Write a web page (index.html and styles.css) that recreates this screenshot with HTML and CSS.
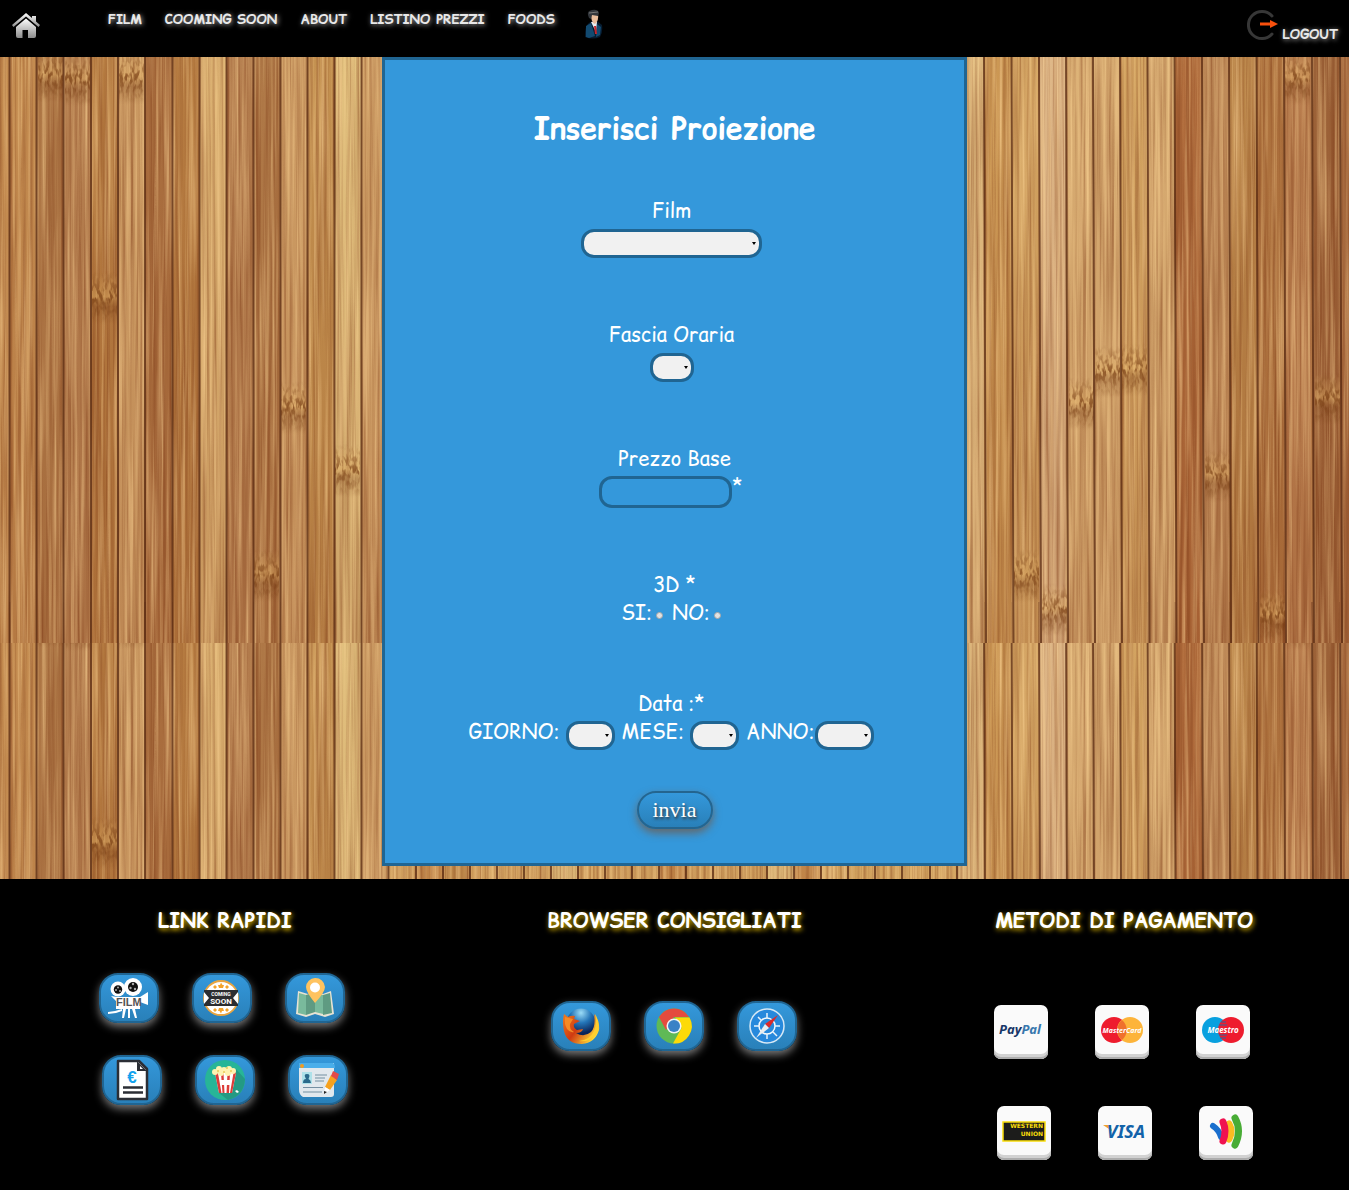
FILE: index.html
```html
<!DOCTYPE html>
<html lang="it">
<head>
<meta charset="utf-8">
<title>Inserisci Proiezione</title>
<link rel="stylesheet" href="styles.css">
</head>
<body>
<header class="topbar">
  <a class="home" href="#" aria-label="Home">
    <svg width="28" height="28" viewBox="0 0 28 28">
      <defs><linearGradient id="steel" x1="0" y1="0" x2="0" y2="1"><stop offset="0" stop-color="#fff"/><stop offset="1" stop-color="#8c8c8c"/></linearGradient></defs>
      <path fill="url(#steel)" d="M14 1 L0 13 L1.500 15 L14 4.500 L26.500 15 L28 13 L24 9.500 V4 H20 V6Z"/>
      <path fill="url(#steel)" d="M14 6.500 L4 15 V24 Q4 26 6 26 H10.500 V18 H16 V26 H22 Q24 26 24 24 V15Z"/>
    </svg>
  </a>
  <nav class="menu">
    <a href="#">FILM</a>
    <a href="#">COOMING SOON</a>
    <a href="#">ABOUT</a>
    <a href="#">LISTINO PREZZI</a>
    <a href="#">FOODS</a>
    <a class="profile" href="#" aria-label="Profilo">
      <svg width="24" height="30" viewBox="0 0 24 30">
        <path fill="#071c30" d="M6 14 Q2 16 2 28 Q10 31 17 28 Q20 23 19 16 L14 12 H9Z"/>
        <path fill="#124a70" d="M3 17 L8 14 L12 27 L6 29 L3 28Z M14 15 L18 18 L17 26 L13 28Z"/>
        <path fill="#e8eef4" d="M8 13 L14 13 L13 23Z"/>
        <path fill="#c8252c" d="M11 17 L13 17 L14 25 L12 25Z"/>
        <path fill="#e9bd9c" d="M8 5 H15 Q16 12 12 15 Q8 14 8 5Z"/>
        <path fill="#32363b" d="M5 6 Q4 2 9 1 Q15 0 16 4 L15 7 L9 6 L8 10 L6 9Z"/>
        <path stroke="#777" stroke-width="1" d="M6 4 L15 3"/>
      </svg>
    </a>
  </nav>
  <a class="logout" href="#">
    <svg width="32" height="32" viewBox="0 0 32 32">
      <path fill="none" stroke="#373737" stroke-width="3" stroke-linecap="round" d="M25 7 A13.500 13.500 0 1 0 25 25"/>
      <path fill="#f9500d" d="M13 13.500 H23 V11 L31 15 L23 19 V16.500 H13Z"/>
    </svg>
    <span>LOGOUT</span>
  </a>
</header>

<main class="stage">
  <form class="card">
    <h1>Inserisci Proiezione</h1>
    <div class="field">
      <label for="film">Film</label>
      <select id="film" class="wide"><option></option></select>
    </div>
    <div class="field">
      <label for="fascia">Fascia Oraria</label>
      <select id="fascia" class="tiny"><option></option></select>
    </div>
    <div class="field centered">
      <label for="prezzo">Prezzo Base</label>
      <div class="price"><input id="prezzo" type="text"><span>*</span></div>
    </div>
    <div class="field choice centered" role="group" aria-labelledby="tred">
      <span id="tred">3D *</span>
      <div class="radios">
        <label for="si">SI:</label><input id="si" type="radio" name="tred">
        <label for="no">NO:</label><input id="no" type="radio" name="tred">
      </div>
    </div>
    <div class="field choice" role="group" aria-labelledby="data">
      <span id="data">Data :*</span>
      <div class="dates">
        <div class="part"><label for="giorno">GIORNO:</label><select id="giorno" class="small"><option></option></select></div>
        <div class="part"><label for="mese">MESE:</label><select id="mese" class="small"><option></option></select></div>
        <div class="part close"><label for="anno">ANNO:</label><select id="anno" class="year"><option></option></select></div>
      </div>
    </div>
    <button type="submit">invia</button>
  </form>
</main>

<footer class="footer">
  <section class="links">
    <h2>LINK RAPIDI</h2>
    <div class="icons">
      <div class="row lead">
        <a class="tile" href="#" aria-label="Film">
          <svg viewBox="0 0 42 42" width="42" height="42">
            <g fill="#fff"><circle cx="10" cy="12" r="7.500"/><circle cx="25" cy="10" r="9"/><path d="M3 19 L9 20 H32 L40 15 V28 L32 25 V32 H8 V24 Z"/><path d="M15 32 H18 L16 41 H14Z M20 32 H22 V41 H20Z M24 32 H27 L29 41 H27Z M7 34 L0 35 L0 37 L8 36 L14 34 L14 32Z"/></g>
            <g fill="#111"><circle cx="10" cy="12.500" r="4.200"/><circle cx="25" cy="10" r="5"/></g>
            <g fill="#aaa"><circle cx="10" cy="10.500" r="1"/><circle cx="8" cy="13" r="1"/><circle cx="12" cy="14" r="1"/><circle cx="25" cy="7" r="1.200"/><circle cx="22.500" cy="11" r="1.200"/><circle cx="27" cy="12" r="1.200"/></g>
            <text x="8" y="28.500" class="logo-film">FILM</text>
          </svg>
        </a>
        <a class="tile" href="#" aria-label="Coming soon">
          <svg viewBox="0 0 42 42" width="42" height="42">
            <circle cx="20" cy="21" r="17" fill="#fff" stroke="#e9a540" stroke-width="1.800"/>
            <path fill="#f4a32b" d="M20 5.500 L21.500 8 L23 8 L22 11 H18 L17 8 L19 8Z M14 8 L16 10 L14 12 L12 10Z M26 8 L28 10 L26 12 L24 10Z M20 36.500 L18.500 34 L17 34 L18 31 H22 L23 34 L21 34Z M14 31 L16 33 L14 35 L12 33Z M26 31 L28 33 L26 35 L24 33Z"/>
            <path fill="#2c2d30" d="M3 13 H37 V29 H3Z"/>
            <path fill="#fff" d="M3 15 L8 21 L3 27Z M37 15 L32 21 L37 27Z"/>
            <text x="20" y="19" text-anchor="middle" class="logo-coming">COMING</text>
            <text x="20" y="27" text-anchor="middle" class="logo-soon">SOON</text>
          </svg>
        </a>
        <a class="tile" href="#" aria-label="Dove siamo">
          <svg viewBox="0 0 42 42" width="42" height="42">
            <path fill="#e8e3d3" d="M4 14 L14 17 L21 14 L29 17 L37 14 L40 37 L31 40 L21 37 L12 40 L2 37Z"/>
            <path fill="#79ba9c" d="M5 16 L12 18 V38 L4 36Z M21 16 L29 18 V37 L21 35Z"/>
            <path fill="#5f9b82" d="M12 18 L21 15 V35 L12 38Z M29 18 L36 16 L38 36 L29 38Z"/>
            <path fill="#ffc35f" d="M21 1 A9.500 9.500 0 0 0 12 10 Q12 15 21 26 Q31 15 31 10 A9.500 9.500 0 0 0 21 1Z"/>
            <circle cx="21" cy="10.500" r="5" fill="#fff"/>
          </svg>
        </a>
      </div>
      <div class="row">
        <a class="tile" href="#" aria-label="Listino prezzi">
          <svg viewBox="0 0 42 42" width="42" height="42">
            <path fill="#fff" stroke="#2b2e35" stroke-width="2.500" stroke-linejoin="round" d="M7 2 H28 L36 10 V40 H7Z"/>
            <path fill="#2b2e35" d="M26 2 L36 12 H26Z"/><path fill="#fff" d="M29 7 L32 10 H29Z"/>
            <path stroke="#2b2e35" stroke-width="2.500" d="M12 28.500 H32 M12 33.500 H32"/>
            <text x="21" y="24" text-anchor="middle" class="logo-euro">€</text>
          </svg>
        </a>
        <a class="tile" href="#" aria-label="Foods">
          <svg viewBox="0 0 42 42" width="42" height="42">
            <circle cx="21" cy="21" r="20" fill="#27b597"/>
            <path fill="#239a83" d="M32 10 L41 20 Q40 37 24 41 L15 34Z"/>
            <path fill="#fff" d="M11 14 H32 L28 34 H15Z"/>
            <path fill="#dc3c39" d="M11 14 H14 L17.500 34 H15Z M17 14 H19.500 L20.500 34 H18.500Z M23.500 14 H26 L25 34 H22.500Z M29.500 14 H32 L28 34 H26Z"/>
            <g fill="#fff3b0"><circle cx="11" cy="13" r="3"/><circle cx="15" cy="10" r="3"/><circle cx="20" cy="11" r="3"/><circle cx="25" cy="10" r="3"/><circle cx="29" cy="12" r="3"/><circle cx="17" cy="14" r="3"/><circle cx="24" cy="14" r="3"/></g>
            <g fill="#eacb57"><circle cx="14" cy="12" r="1"/><circle cx="20" cy="13" r="1"/><circle cx="27" cy="12" r="1"/><circle cx="23" cy="9" r="1"/></g>
            <path fill="#fff" d="M16 21 H27 V26 H16Z M31 32 l2 -1 l2 2 l-2 1Z"/>
          </svg>
        </a>
        <a class="tile" href="#" aria-label="Registrazione">
          <svg viewBox="0 0 42 42" width="42" height="42">
            <path fill="#e1e8ed" d="M2 4 H37 V35 Q37 38 34 38 H6 Q2 36 2 30Z"/>
            <path fill="#4aaeea" d="M2 4 H36 Q38 5 38 9 H2Z"/><circle cx="5" cy="7" r="2" fill="#f39b1d"/>
            <path fill="#aee1e9" d="M5 13 H15 V25 H5Z"/><path fill="#2b6a8b" d="M6 24 Q6 20 9 20 Q6 15 10 15 Q14 15 11.500 20 Q14 21 14 24Z"/>
            <path stroke="#748fa2" stroke-width="1.200" d="M18 16 H30 M18 19 H28 M18 22 H27 M6 28.500 H26 M6 33 H25"/>
            <path fill="#f6a21e" d="M34 16 L40 21 L33 31 L28 28Z"/><path fill="#e24a4a" d="M36 12 L42 15 L40 21 L34 17Z"/><path fill="#fff" d="M28 28 L33 31 L27 35Z"/><path fill="#222" d="M27 32 L30 33 L27 35Z"/>
          </svg>
        </a>
      </div>
    </div>
  </section>

  <section class="browsers">
    <h2>BROWSER CONSIGLIATI</h2>
    <div class="icons">
      <div class="row">
        <a class="tile" href="#" aria-label="Firefox">
          <svg viewBox="0 0 42 42" width="42" height="42">
            <defs><linearGradient id="flame" x1="0" y1="0" x2="1" y2=".6"><stop offset="0" stop-color="#ee7d1e"/><stop offset=".5" stop-color="#cf3a12"/><stop offset="1" stop-color="#ffdc38"/></linearGradient><radialGradient id="globe" cx=".5" cy=".15" r=".7"><stop offset="0" stop-color="#9bdcf7"/><stop offset=".5" stop-color="#2475b8"/><stop offset="1" stop-color="#0b2458"/></radialGradient></defs>
            <circle cx="21" cy="18" r="14.500" fill="url(#globe)"/>
            <path fill="url(#flame)" d="M4 9 L8 12 Q12 10 15 11 L14 14 L20 16 L14 19 Q13 23 17 25 L23 24 Q22 28 16 28 Q24 33 31 27 Q36 22 34 9 Q40 17 39 25 Q35 38 22 39 Q7 39 4 26 Q2 17 4 9Z"/>
            <path fill="#ffcf2e" d="M35 9 Q42 20 36 29 Q28 38 19 36 Q30 35 34 26 Q37 19 35 9Z"/>
            <path fill="#f58a25" d="M5 12 Q9 13 13 14 L10 19 Q9 24 14 27 Q10 28 7 24 Q4 19 5 12Z"/>
          </svg>
        </a>
        <a class="tile" href="#" aria-label="Chrome">
          <svg viewBox="0 0 42 42" width="42" height="42">
            <circle cx="21" cy="21" r="17.500" fill="#5fb956"/>
            <path fill="#e44b3e" d="M6 12 A17.500 17.500 0 0 1 36 12 H21 L13 25Z"/>
            <path fill="#fdda08" d="M36.500 12.500 A17.500 17.500 0 0 1 20 38.500 L28.500 23 L22 12.500Z"/>
            <circle cx="21" cy="21" r="7.500" fill="#f1f4f5"/><circle cx="21" cy="21" r="6" fill="#3a82c6"/>
          </svg>
        </a>
        <a class="tile" href="#" aria-label="Safari">
          <svg viewBox="0 0 42 42" width="42" height="42">
            <circle cx="21" cy="21" r="17" fill="#2789dc" stroke="#d6e8f5" stroke-width="1.500"/>
            <circle cx="21" cy="21" r="8" fill="none" stroke="#f5f9fc" stroke-width="1.500"/>
            <path stroke="#e6f2fb" stroke-width="1.500" d="M21 8 V13 M21 29 V34 M8 21 H13 M29 21 H34 M12 12 L15 15 M27 27 L31 31"/>
            <path fill="#dd2929" d="M32 10 L19 19 L23 23Z"/><path fill="#e8edef" d="M10 33 L19 19 L23 23Z"/>
          </svg>
        </a>
      </div>
    </div>
  </section>

  <section class="payments">
    <h2>METODI DI PAGAMENTO</h2>
    <div class="icons">
      <div class="row lead">
        <a class="pay" href="#" aria-label="PayPal"><svg viewBox="0 0 54 54" width="54" height="54"><text x="5" y="29" class="logo-paypal" fill="#173768">Pay<tspan fill="#3878ae">Pal</tspan></text></svg></a>
        <a class="pay" href="#" aria-label="MasterCard"><svg viewBox="0 0 54 54" width="54" height="54"><circle cx="19" cy="25" r="13" fill="#ee1c2e"/><circle cx="35" cy="25" r="13" fill="#fdb43a"/><path fill="#ef712d" d="M27 15 A13 13 0 0 1 27 35 A13 13 0 0 1 27 15Z"/><text x="27" y="28" text-anchor="middle" class="logo-master">MasterCard</text></svg></a>
        <a class="pay" href="#" aria-label="Maestro"><svg viewBox="0 0 54 54" width="54" height="54"><circle cx="19" cy="25" r="13" fill="#08a0df"/><circle cx="35" cy="25" r="13" fill="#ee1c2e"/><path stroke="#28699d" stroke-width="1" d="M25 17 H30 M23 20 H31 M23 30 H31 M24 33 H30"/><text x="27" y="28" text-anchor="middle" class="logo-maestro">Maestro</text></svg></a>
      </div>
      <div class="row">
        <a class="pay" href="#" aria-label="Western Union"><svg viewBox="0 0 54 54" width="54" height="54"><path fill="#1c1c1b" stroke="#f9dd0a" stroke-width="1.500" d="M6 16 H48 V35 H6Z"/><text x="46" y="22" text-anchor="end" class="logo-wu">WESTERN</text><text x="46" y="30" text-anchor="end" class="logo-wu">UNION</text></svg></a>
        <a class="pay" href="#" aria-label="Visa"><svg viewBox="0 0 54 54" width="54" height="54"><path fill="#efa12e" d="M5 19 H12 L14 25Z"/><text x="28" y="32" text-anchor="middle" class="logo-visa">VISA</text></svg></a>
        <a class="pay" href="#" aria-label="Wallet"><svg viewBox="0 0 54 54" width="54" height="54"><g fill="none" stroke-linecap="round"><path stroke="#1b6fce" stroke-width="6" d="M14 20 Q20 24 22 31"/><path stroke="#fbbc22" stroke-width="7" d="M30 18 Q34 25 30 33"/><path stroke="#f01250" stroke-width="7" d="M24 16 Q28 25 24 35"/><path stroke="#48ac35" stroke-width="7" d="M36 12 Q43 25 36 39"/></g></svg></a>
      </div>
    </div>
  </section>
</footer>
</body>
</html>
```
FILE: styles.css
```css
* { box-sizing: border-box; }

body {
  margin: 0;
  min-height: 100vh;
  display: flex;
  flex-direction: column;
  background: #000;
  color: #fff;
  font-family: "Comic Sans MS", "Comic Relief", "Comic Neue", "Noto Sans", sans-serif;
}

a { color: inherit; text-decoration: none; }
svg { display: block; }

/* top bar */
.topbar {
  display: flex;
  align-items: flex-start;
  min-height: 57px;
  padding: 9px 11px 9px 12px;
  font-size: 13px;
  line-height: 20px;
  font-weight: bold;
  color: #e8e8e8;
  text-shadow: 1px 1px 5px #aaa;
}
.home { padding-top: 3px; }
.menu {
  display: flex;
  gap: 23px;
  margin-left: 68px;
  margin-right: auto;
}
.profile { padding-left: 5px; }
.logout { display: flex; gap: 4px; }
.logout span { padding-top: 15px; }

/* wooden wall */
.stage {
  display: flex;
  justify-content: center;
  padding-bottom: 13px;
  --wood: url("data:image/svg+xml,%3Csvg xmlns='http://www.w3.org/2000/svg' viewBox='0 0 1349 586' preserveAspectRatio='none'%3E%3Cdefs%3E%3Cfilter id='g' x='0' y='0' width='1' height='1' color-interpolation-filters='sRGB'%3E%3CfeTurbulence type='fractalNoise' baseFrequency='.3 .004' numOctaves='3' seed='4'/%3E%3CfeColorMatrix values='0 0 0 0 .5 0 0 0 0 .24 0 0 0 0 .1 1.200 0 0 0 -.48'/%3E%3C/filter%3E%3Cfilter id='h' x='0' y='0' width='1' height='1' color-interpolation-filters='sRGB'%3E%3CfeTurbulence type='fractalNoise' baseFrequency='.28 .005' numOctaves='3' seed='9'/%3E%3CfeColorMatrix values='0 0 0 0 1 0 0 0 0 .85 0 0 0 0 .6 1.200 0 0 0 -.5'/%3E%3C/filter%3E%3Cfilter id='n' x='0' y='0' width='1349' height='586' filterUnits='userSpaceOnUse' color-interpolation-filters='sRGB'%3E%3CfeTurbulence type='fractalNoise' baseFrequency='.3 .12' numOctaves='2' seed='7' result='t'/%3E%3CfeColorMatrix in='t' values='0 0 0 0 .46 0 0 0 0 .23 0 0 0 0 .07 5 0 0 0 -2.200' result='c'/%3E%3CfeComposite in='c' in2='SourceAlpha' operator='in'/%3E%3C/filter%3E%3ClinearGradient id='v' x2='0' y2='1'%3E%3Cstop stop-color='%23853c18' stop-opacity='0'/%3E%3Cstop offset='1' stop-color='%23853c18' stop-opacity='.24'/%3E%3C/linearGradient%3E%3ClinearGradient id='k' x2='0' y2='1'%3E%3Cstop stop-color='%238a4c18' stop-opacity='0'/%3E%3Cstop offset='.5' stop-color='%238a4c18'/%3E%3Cstop offset='1' stop-color='%238a4c18' stop-opacity='0'/%3E%3C/linearGradient%3E%3ClinearGradient id='l' x2='0' y2='1'%3E%3Cstop stop-color='%23e4b468' stop-opacity='0'/%3E%3Cstop offset='.45' stop-color='%23e4b468' stop-opacity='.4'/%3E%3Cstop offset='.65' stop-color='%23703810' stop-opacity='.25'/%3E%3Cstop offset='1' stop-color='%23703810' stop-opacity='0'/%3E%3C/linearGradient%3E%3Crect id='q' x='-12' y='-24' width='25' height='52' fill='url(%23l)'/%3E%3Crect id='r' x='-12' y='-26' width='25' height='52' fill='url(%23k)'/%3E%3C/defs%3E%3Cg stroke-width='27' fill='none'%3E%3Cpath stroke='%23c48c50' d='M-4 0V586M24 0V586'/%3E%3Cpath stroke='%23b07a48' d='M50 0V586M267 0V586'/%3E%3Cpath stroke='%23b68050' d='M77 0V586M240 0V586'/%3E%3Cpath stroke='%23b67c41' d='M104 0V586M186 0V586'/%3E%3Cpath stroke='%23cf9f66' d='M131 0V586M294 0V586M375 0V586'/%3E%3Cpath stroke='%23ab7040' d='M159 0V586'/%3E%3Cpath stroke='%23dcb272' d='M213 0V586'/%3E%3Cpath stroke='%23c3904f' d='M321 0V586M457 0V586'/%3E%3Cpath stroke='%23e3c27f' d='M348 0V586M564 0V586M781 0V586'/%3E%3Cpath stroke='%23d9ab66' d='M402 0V586M484 0V586M511 0V586M538 0V586M592 0V586M619 0V586M646 0V586M700 0V586M727 0V586M754 0V586'/%3E%3Cpath stroke='%23c88e4e' d='M430 0V586M673 0V586M808 0V586'/%3E%3Cpath stroke='%23dcb068' d='M835 0V586M862 0V586M889 0V586M916 0V586M943 0V586'/%3E%3Cpath stroke='%23e2be82' d='M971 0V586'/%3E%3Cpath stroke='%23cc9854' d='M998 0V586'/%3E%3Cpath stroke='%23d4a562' d='M1025 0V586M1134 0V586'/%3E%3Cpath stroke='%23dfb888' d='M1053 0V586'/%3E%3Cpath stroke='%23daaf74' d='M1080 0V586M1107 0V586M1161 0V586'/%3E%3Cpath stroke='%23b06c3c' d='M1189 0V586'/%3E%3Cpath stroke='%23be8a58' d='M1216 0V586'/%3E%3Cpath stroke='%23b98448' d='M1243 0V586'/%3E%3Cpath stroke='%23b07540' d='M1270 0V586'/%3E%3Cpath stroke='%23bb8050' d='M1298 0V586'/%3E%3Cpath stroke='%239c6238' d='M1326 0V586'/%3E%3Cpath stroke='%23a86c40' d='M1353 0V586'/%3E%3C/g%3E%3Crect width='1349' height='586' fill='url(%23v)'/%3E%3Crect width='1349' height='586' filter='url(%23g)'/%3E%3Crect width='1349' height='586' filter='url(%23h)'/%3E%3Cg%3E%3Cuse href='%23q' x='50' y='18'/%3E%3Cuse href='%23q' x='77' y='22'/%3E%3Cuse href='%23q' x='131' y='20'/%3E%3Cuse href='%23q' x='104' y='240'/%3E%3Cuse href='%23q' x='293' y='350'/%3E%3Cuse href='%23q' x='347' y='413'/%3E%3Cuse href='%23q' x='266' y='518'/%3E%3Cuse href='%23q' x='1297' y='21'/%3E%3Cuse href='%23q' x='1081' y='346'/%3E%3Cuse href='%23q' x='1107' y='314'/%3E%3Cuse href='%23q' x='1134' y='312'/%3E%3Cuse href='%23q' x='1217' y='418'/%3E%3Cuse href='%23q' x='1327' y='341'/%3E%3Cuse href='%23q' x='1026' y='518'/%3E%3Cuse href='%23q' x='1054' y='552'/%3E%3Cuse href='%23q' x='1272' y='558'/%3E%3C/g%3E%3Cg filter='url(%23n)' opacity='.7'%3E%3Cuse href='%23r' x='50' y='18'/%3E%3Cuse href='%23r' x='77' y='22'/%3E%3Cuse href='%23r' x='131' y='20'/%3E%3Cuse href='%23r' x='104' y='240'/%3E%3Cuse href='%23r' x='293' y='350'/%3E%3Cuse href='%23r' x='347' y='413'/%3E%3Cuse href='%23r' x='266' y='518'/%3E%3Cuse href='%23r' x='1297' y='21'/%3E%3Cuse href='%23r' x='1081' y='346'/%3E%3Cuse href='%23r' x='1107' y='314'/%3E%3Cuse href='%23r' x='1134' y='312'/%3E%3Cuse href='%23r' x='1217' y='418'/%3E%3Cuse href='%23r' x='1327' y='341'/%3E%3Cuse href='%23r' x='1026' y='518'/%3E%3Cuse href='%23r' x='1054' y='552'/%3E%3Cuse href='%23r' x='1272' y='558'/%3E%3C/g%3E%3Cg fill='none' stroke='%23582a12' stroke-width='2' stroke-opacity='.75'%3E%3Cpath d='M9.500 0V586M36.500 0V586M63.500 0V586M91 0V586M118 0V586M145 0V586M172.500 0V586M199.500 0V586M226.500 0V586M253.500 0V586M280.500 0V586M307.500 0V586M334.500 0V586M361.500 0V586M388.500 0V586M416 0V586M443 0V586M470 0V586M497 0V586M524 0V586M551 0V586M578 0V586M605 0V586M632 0V586M659 0V586M686 0V586M713 0V586M740 0V586M767 0V586M794 0V586M821 0V586M848 0V586M875 0V586M902 0V586M930 0V586M957 0V586'/%3E%3Cpath d='M984 0L986 586M1011.500 0L1013.500 586M1039 0L1041 586M1066 0L1068 586M1093 0L1095 586M1120 0L1122 586M1147.500 0L1149.500 586M1174.500 0L1176.500 586M1202 0L1204 586M1229 0L1231 586M1256.500 0L1258.500 586M1284 0L1286 586M1312 0L1314 586M1340 0L1342 586'/%3E%3C/g%3E%3C/svg%3E");
  background-color: #c48c50;
  background-image: var(--wood), var(--wood);
  background-position: 0 0, 0 545px;
  background-size: 100% 586px;
  background-repeat: no-repeat;
}

/* form card */
.card {
  display: flex;
  flex-direction: column;
  align-items: center;
  gap: 63px;
  width: 585px;
  max-width: 100%;
  padding: 46px 0 34px;
  border: 3px solid #206592;
  background: #3498db;
  font-size: 20px;
  line-height: 28px;
}
h1 {
  margin: 0 0 -16px;
  font-size: 30px;
  line-height: 44px;
}
.field {
  display: flex;
  flex-direction: column;
  align-items: center;
  gap: 4px;
  padding-right: 6px;
}
.centered { gap: 3px; padding-right: 0; }
.centered > div { padding-right: 7px; }
.choice { gap: 0; }

select, .price input {
  margin: 0;
  border: 3px solid #206592;
  border-radius: 13px;
  font: inherit;
}
select {
  appearance: none;
  height: 29px;
  background: #f1f1f1 url("data:image/svg+xml,%3Csvg xmlns='http://www.w3.org/2000/svg' width='4' height='3'%3E%3Cpath d='M0 0H4L2 3Z'/%3E%3C/svg%3E") no-repeat right 3px center;
}
.wide { width: 181px; }
.tiny { width: 44px; }
.small { width: 49px; }
.year { width: 59px; }

.price { display: flex; align-items: flex-start; line-height: 22px; }
.price input { width: 133px; height: 32px; background: transparent; color: #fff; padding: 0 10px; }
.radios { display: flex; align-items: center; gap: 4px; }
.radios input {
  appearance: none;
  width: 7px;
  height: 7px;
  margin: 5px 5px 0 0;
  border: 1px solid #a5a5a5;
  border-radius: 50%;
  background: #e2e2e2;
}
.radios input:last-child { margin-right: 0; }
.dates { display: flex; gap: 7px; }
.part { display: flex; gap: 6px; }
.part.close { gap: 1px; }
.part select { margin-top: 3px; }

button {
  margin-top: -22px;
  padding: 0 14px;
  height: 38px;
  border: 2px solid #24658f;
  border-radius: 20px;
  background: linear-gradient(#3498db, #2980b9);
  box-shadow: 0 4px 8px #666;
  color: #fff;
  font: 22px/34px "Liberation Serif", serif;
  text-shadow: 1px 2px 3px #333;
}

/* footer */
.footer {
  flex: 1;
  display: grid;
  grid-template-columns: repeat(3, 1fr);
  padding: 28px 0 30px;
}
h2 {
  margin: 0;
  text-align: center;
  font-size: 20px;
  line-height: 28px;
  text-shadow: 1px 2px 5px #e0b800;
}
.icons { display: flex; flex-direction: column; }
.row { display: flex; justify-content: center; gap: 33px; }
.lead { padding-right: 6px; }
.links .icons { margin-top: 38px; gap: 32px; }
.browsers .icons { margin-top: 66px; }
.payments .icons { margin-top: 70px; padding-left: 2px; gap: 47px; }
.payments .row { gap: 47px; }

.tile {
  display: flex;
  align-items: center;
  justify-content: center;
  width: 60px;
  height: 50px;
  border: 2px solid #206592;
  border-radius: 19px;
  background: linear-gradient(#3498db, #2980b9);
  box-shadow: 0 4px 8px #777;
}
.pay {
  width: 54px;
  height: 54px;
  border-radius: 7px;
  background: #fafafa;
  box-shadow: inset 0 -2px #adadad, inset 0 -5px #d2d2d2;
}

/* lettering inside the logos */
.logo-film { font: bold 11px "Liberation Sans", sans-serif; fill: #555; }
.logo-coming { font: bold 5px Roboto, sans-serif; fill: #fff; }
.logo-soon { font: bold 8px Roboto, sans-serif; fill: #fff; }
.logo-euro { font: bold 17px "Liberation Sans", sans-serif; fill: #12a2ee; }
.logo-paypal { font: italic bold 13px "Noto Sans", sans-serif; }
.logo-master { font: italic bold 7px "Noto Sans", sans-serif; fill: #fff; }
.logo-maestro { font: italic bold 8px "Noto Sans", sans-serif; fill: #fff; }
.logo-wu { font: bold 6px "DejaVu Sans", sans-serif; fill: #f9dd0a; }
.logo-visa { font: italic bold 18px "Noto Sans", sans-serif; fill: #1262a9; }
```
